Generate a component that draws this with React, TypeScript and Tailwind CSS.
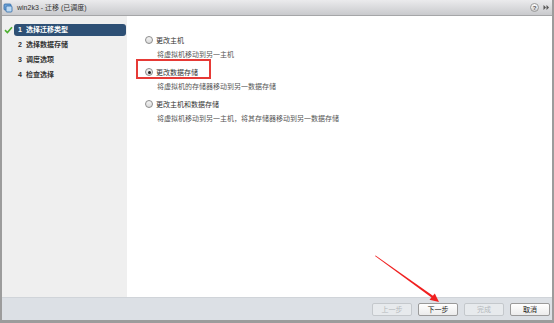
import React from "react";

const steps = ["选择迁移类型", "选择数据存储", "调度选项", "检查选择"];

const options = [
  { title: "更改主机", desc: "将虚拟机移动到另一主机", checked: false },
  { title: "更改数据存储", desc: "将虚拟机的存储器移动到另一数据存储", checked: true },
  { title: "更改主机和数据存储", desc: "将虚拟机移动到另一主机，将其存储器移动到另一数据存储", checked: false },
];

function Radio({ checked }: { checked: boolean }) {
  return (
    <span className="w-[8px] h-[8px] rounded-full border border-[#8d8d8d] bg-gradient-to-b from-[#f4f4f4] to-[#dcdcdc] flex items-center justify-center shrink-0">
      {checked && <span className="w-[3px] h-[3px] rounded-full bg-[#222]" />}
    </span>
  );
}

function Button({ label, disabled }: { label: string; disabled?: boolean }) {
  return (
    <button
      className={`w-[40px] h-[13px] rounded-[2px] border text-[7px] leading-none flex items-center justify-center ${
        disabled
          ? "border-[#c4c8cc] bg-[#e7eaed] text-[#b4b8bc]"
          : "border-[#9a9a9a] bg-gradient-to-b from-white to-[#ececec] text-[#222]"
      }`}
    >
      {label}
    </button>
  );
}

export default function App() {
  return (
    <div className="relative w-[554px] h-[323px] flex flex-col bg-white border-l-2 border-r-2 border-b-[3px] border-[#9c9c9c] font-['Liberation_Sans','Noto_Sans_CJK_SC',sans-serif] overflow-hidden">
      {/* title bar */}
      <div className="h-[16px] shrink-0 flex items-center bg-gradient-to-b from-[#ebebed] to-[#c9cacd] border-b border-[#a5a6a8] pl-[1px] pr-[2px]">
        <svg width="10" height="10" viewBox="0 0 10 10" className="mr-[4px]">
          <rect x="1" y="1" width="7" height="6" rx="1" fill="#6fa4d8" stroke="#2f6aa8" strokeWidth="0.8" />
          <rect x="3" y="3" width="6" height="6" rx="1" fill="#bcd9f2" stroke="#2f6aa8" strokeWidth="0.8" />
        </svg>
        <span className="text-[7px] text-[#333] leading-none">win2k3 - 迁移 (已调度)</span>
        <div className="ml-auto flex items-center gap-[4px]">
          <span className="w-[9px] h-[9px] rounded-full bg-gradient-to-b from-white to-[#cfcfcf] border border-[#9a9a9a] text-[6px] font-bold text-[#555] flex items-center justify-center leading-none">
            ?
          </span>
          <svg width="7" height="7" viewBox="0 0 7 7">
            <path d="M0.5 1 L3 3.5 L0.5 6 Z" fill="#555" />
            <path d="M3.5 1 L6 3.5 L3.5 6 Z" fill="#555" />
          </svg>
        </div>
      </div>

      <div className="flex flex-1 min-h-0">
        {/* sidebar */}
        <div className="w-[125px] shrink-0 bg-[#efefef] pt-[6px] flex flex-col">
          {steps.map((s, i) => (
            <div key={s} className="h-[15px] flex items-center">
              <div className="w-[12px] flex justify-center">
                {i === 0 && (
                  <svg width="9" height="8" viewBox="0 0 9 8">
                    <path d="M1 4.2 L3.4 6.5 L8 1.2" fill="none" stroke="#4caf2f" strokeWidth="1.6" />
                  </svg>
                )}
              </div>
              <div
                className={`flex-1 mr-[1px] h-[12px] rounded-[3px] flex items-center pl-[4px] gap-[4px] text-[7px] font-bold leading-none ${
                  i === 0 ? "bg-[#2e5075] text-white" : "text-[#333]"
                }`}
              >
                <span>{i + 1}</span>
                <span>{s}</span>
              </div>
            </div>
          ))}
        </div>

        {/* content */}
        <div className="flex-1 bg-white pl-[18px] pt-[18px] flex flex-col">
          {options.map((o) => (
            <div key={o.title} className="mb-[6px]">
              <div className="h-[12px] flex items-center gap-[3px]">
                <Radio checked={o.checked} />
                <span className="text-[7px] text-[#333] leading-none">{o.title}</span>
              </div>
              <div className="h-[12px] mt-[2px] pl-[12px] flex items-center text-[7px] text-[#555] leading-none">
                {o.desc}
              </div>
            </div>
          ))}
        </div>
      </div>

      {/* footer */}
      <div className="h-[23px] shrink-0 bg-[#dce0e5] border-t border-[#d0d4d9] flex items-center justify-end gap-[6px] pr-[2px]">
        <Button label="上一步" disabled />
        <Button label="下一步" />
        <Button label="完成" disabled />
        <Button label="取消" />
      </div>

      {/* annotations */}
      <div className="absolute left-[134px] top-[59px] w-[75px] h-[20px] border-2 border-[#e63a36]" />
      <svg className="absolute left-0 top-0 pointer-events-none" width="554" height="323">
        <path d="M373 256 L373.6 255.4 L433.4 297.6 L432.2 299.4 Z" fill="#f02020" />
        <path d="M437 302 L427.5 299.8 L432.8 293.6 Z" fill="#f02020" />
      </svg>
    </div>
  );
}
